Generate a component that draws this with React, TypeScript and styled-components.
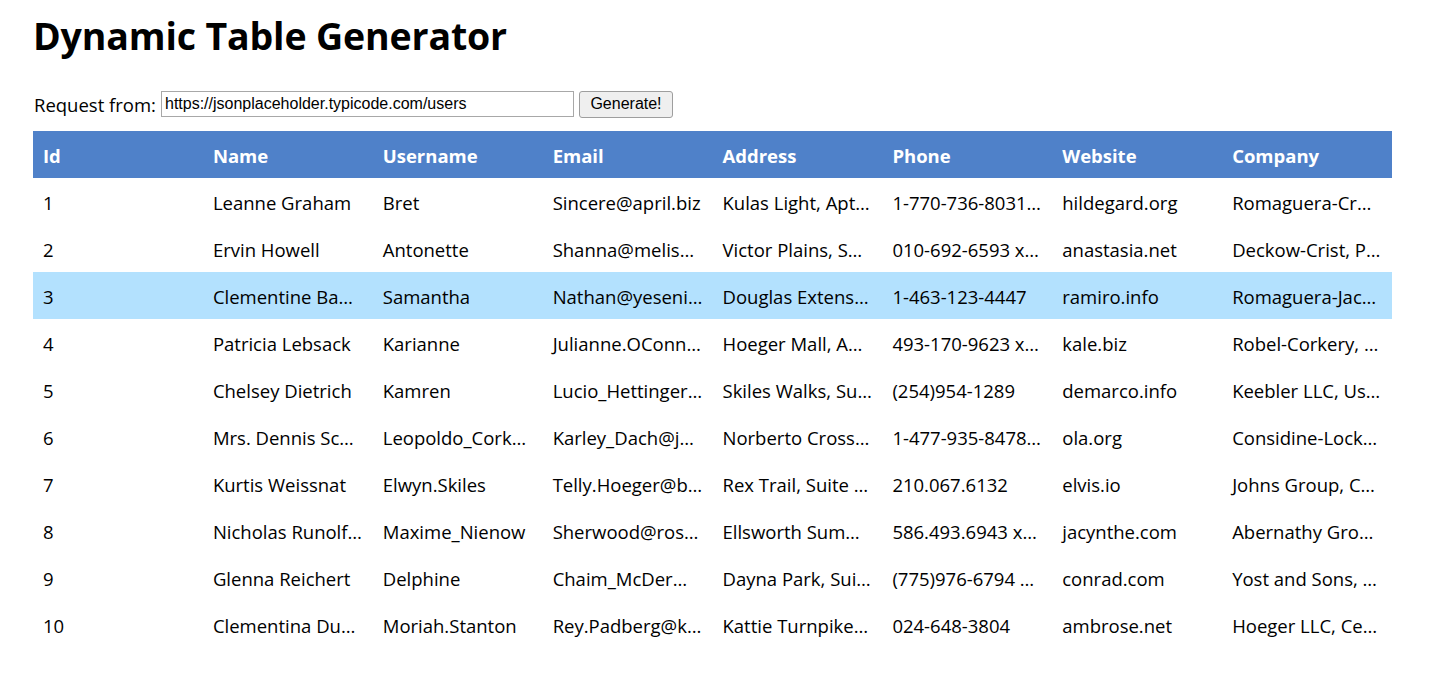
import React from 'react';
import styled, { createGlobalStyle } from 'styled-components';

const GlobalStyle = createGlobalStyle`
  body {
    margin: 0;
    background: #ffffff;
    font-family: "Open Sans", "Noto Sans", sans-serif;
    color: #000000;
  }
`;

const Page = styled.div`
  padding: 0 58px 0 33px;
`;

const Title = styled.h1`
  margin: 0;
  padding-top: 10px;
  font-size: 37.5px;
  line-height: 52px;
  font-weight: 700;
  letter-spacing: -0.15px;
`;

const RequestBar = styled.div`
  display: flex;
  align-items: center;
  margin-top: 28px;
  height: 28px;
`;

const Label = styled.label`
  font-size: 18.5px;
  margin-left: 1px;
  margin-right: 5px;
`;

const UrlInput = styled.input`
  width: 413px;
  height: 26px;
  box-sizing: border-box;
  padding: 1px 3px;
  border: 1px solid #a8a8a8;
  font-family: "Liberation Sans", Arial, sans-serif;
  font-size: 16px;
  color: #000;
`;

const Button = styled.button`
  margin-left: 5px;
  height: 27px;
  width: 94px;
  box-sizing: border-box;
  background: #efefef;
  border: 1px solid #9e9e9e;
  border-radius: 3px;
  font-family: "Liberation Sans", Arial, sans-serif;
  font-size: 16px;
  color: #000;
  padding: 0;
`;

const Table = styled.table`
  margin-top: 13px;
  width: 1359px;
  table-layout: fixed;
  border-collapse: collapse;
  font-size: 18.5px;
`;

const HeadCell = styled.th`
  background: #4f81c9;
  color: #ffffff;
  font-weight: 700;
  text-align: left;
  height: 46px;
  padding: 1px 10px 0;
`;

const Row = styled.tr<{ $active?: boolean }>`
  background: ${(p) => (p.$active ? '#b3e1fe' : 'transparent')};
`;

const Cell = styled.td`
  height: 46px;
  padding: 1px 10px 0;
  white-space: nowrap;
  overflow: hidden;
  text-overflow: ellipsis;
`;

const columns = ['Id', 'Name', 'Username', 'Email', 'Address', 'Phone', 'Website', 'Company'];

const users = [
  ['1', 'Leanne Graham', 'Bret', 'Sincere@april.biz', 'Kulas Light, Apt. 556, Gwenborough', '1-770-736-8031 x56442', 'hildegard.org', 'Romaguera-Crona, Multi-layered client-server neural-net'],
  ['2', 'Ervin Howell', 'Antonette', 'Shanna@melissa.tv', 'Victor Plains, Suite 879, Wisokyburgh', '010-692-6593 x09125', 'anastasia.net', 'Deckow-Crist, Proactive didactic contingency'],
  ['3', 'Clementine Bauch', 'Samantha', 'Nathan@yesenia.net', 'Douglas Extension, Suite 847, McKenziehaven', '1-463-123-4447', 'ramiro.info', 'Romaguera-Jacobson, Face to face bifurcated interface'],
  ['4', 'Patricia Lebsack', 'Karianne', 'Julianne.OConner@kory.org', 'Hoeger Mall, Apt. 692, South Elvis', '493-170-9623 x156', 'kale.biz', 'Robel-Corkery, Multi-tiered zero tolerance productivity'],
  ['5', 'Chelsey Dietrich', 'Kamren', 'Lucio_Hettinger@annie.ca', 'Skiles Walks, Suite 351, Roscoeview', '(254)954-1289', 'demarco.info', 'Keebler LLC, User-centric fault-tolerant solution'],
  ['6', 'Mrs. Dennis Schulist', 'Leopoldo_Corkery', 'Karley_Dach@jasper.info', 'Norberto Crossing, Apt. 950, South Christy', '1-477-935-8478 x6430', 'ola.org', 'Considine-Lockman, Synchronised bottom-line interface'],
  ['7', 'Kurtis Weissnat', 'Elwyn.Skiles', 'Telly.Hoeger@billy.biz', 'Rex Trail, Suite 280, Howemouth', '210.067.6132', 'elvis.io', 'Johns Group, Configurable multimedia task-force'],
  ['8', 'Nicholas Runolfsdottir V', 'Maxime_Nienow', 'Sherwood@rosamond.me', 'Ellsworth Summit, Suite 729, Aliyaview', '586.493.6943 x140', 'jacynthe.com', 'Abernathy Group, Implemented secondary concept'],
  ['9', 'Glenna Reichert', 'Delphine', 'Chaim_McDermott@dana.io', 'Dayna Park, Suite 449, Bartholomebury', '(775)976-6794 x41206', 'conrad.com', 'Yost and Sons, Switchable contextually-based project'],
  ['10', 'Clementina DuBuque', 'Moriah.Stanton', 'Rey.Padberg@karina.biz', 'Kattie Turnpike, Suite 198, Lebsackbury', '024-648-3804', 'ambrose.net', 'Hoeger LLC, Centralized empowering task-force'],
];

const App = () => (
  <Page>
    <GlobalStyle />
    <Title>Dynamic Table Generator</Title>
    <RequestBar>
      <Label htmlFor="url">Request from:</Label>
      <UrlInput id="url" defaultValue="https://jsonplaceholder.typicode.com/users" />
      <Button>Generate!</Button>
    </RequestBar>
    <Table>
      <thead>
        <tr>
          {columns.map((c) => (
            <HeadCell key={c}>{c}</HeadCell>
          ))}
        </tr>
      </thead>
      <tbody>
        {users.map((u) => (
          <Row key={u[0]} $active={u[0] === '3'}>
            {u.map((v, i) => (
              <Cell key={i}>{v}</Cell>
            ))}
          </Row>
        ))}
      </tbody>
    </Table>
  </Page>
);

export default App;
